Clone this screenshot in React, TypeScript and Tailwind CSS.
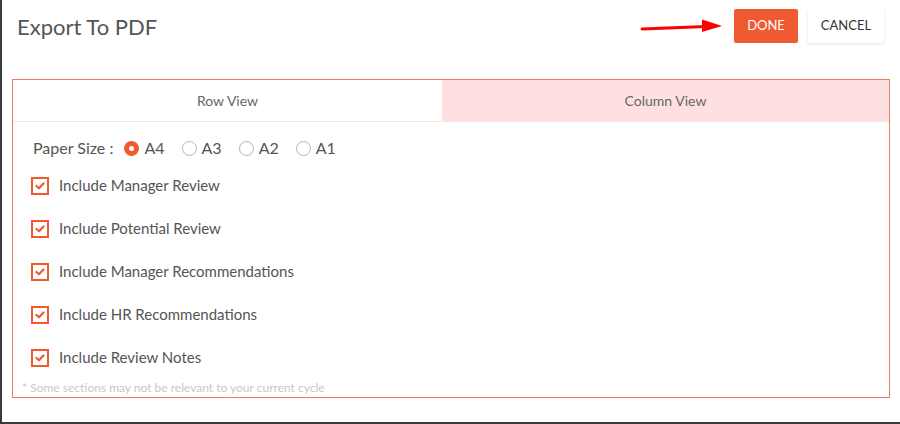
import React from "react";

const items = [
  "Include Manager Review",
  "Include Potential Review",
  "Include Manager Recommendations",
  "Include HR Recommendations",
  "Include Review Notes",
];

function Check() {
  return (
    <span className="flex h-[18px] w-[18px] items-center justify-center border-2 border-[#f05a30] bg-white">
      <svg width="10" height="8" viewBox="0 0 10 8">
        <path d="M1.5 4 L4 6.3 L8.5 1.5" fill="none" stroke="#f05a30" strokeWidth="2.2" strokeLinecap="round" strokeLinejoin="round" />
      </svg>
    </span>
  );
}

function Radio({ checked, label }: { checked?: boolean; label: string }) {
  return (
    <span className="flex items-center gap-[5px]">
      {checked ? (
        <span className="flex h-[15px] w-[15px] items-center justify-center rounded-full bg-[#f05a30]">
          <span className="h-[5px] w-[5px] rounded-full bg-white" />
        </span>
      ) : (
        <span className="h-[15px] w-[15px] rounded-full border border-[#b5b5b5] bg-white" />
      )}
      <span>{label}</span>
    </span>
  );
}

export default function App() {
  return (
    <div className="h-[424px] w-[900px] overflow-hidden bg-[#3a3a3a] pl-[2px]" style={{ fontFamily: "Lato, 'Open Sans', sans-serif" }}>
      <div className="flex h-[422px] w-[898px] flex-col bg-white">
        <div className="flex h-[79px] items-start justify-between">
          <h1 className="ml-[15px] mt-[10px] text-[22px] font-normal text-[#555]">Export To PDF</h1>
          <div className="mr-[16px] mt-[9px] flex items-center">
            <svg width="86" height="14" viewBox="0 0 86 14" className="mr-[8px]">
              <path d="M2 10 L66 7.5" stroke="#f00" strokeWidth="3" strokeLinecap="round" />
              <path d="M62 0.5 L82 7 L62 13 Z" fill="#f00" />
            </svg>
            <button className="h-[34px] w-[64px] rounded-[2px] bg-[#f05a30] text-[13px] text-white">DONE</button>
            <button className="ml-[10px] h-[34px] w-[76px] rounded-[2px] bg-white text-[13px] text-[#333] shadow-[0_1px_3px_rgba(0,0,0,0.12)]">CANCEL</button>
          </div>
        </div>
        <div className="ml-[10px] flex h-[319px] w-[878px] flex-col border border-[#ef7b5c]">
          <div className="flex h-[43px] border-b border-[#fbe3e0]">
            <div className="flex w-[429px] items-center justify-center bg-white text-[14px] text-[#666]">Row View</div>
            <div className="flex flex-1 items-center justify-center bg-[#ffe0e0] text-[14px] text-[#666]">Column View</div>
          </div>
          <div className="flex h-[39px] items-end gap-[17px] pl-[20px] text-[16px] text-[#555]">
            <span className="mr-[-6px]">Paper Size :</span>
            <Radio checked label="A4" />
            <Radio label="A3" />
            <Radio label="A2" />
            <Radio label="A1" />
          </div>
          <div className="flex flex-col pl-[18px] pt-[4px]">
            {items.map((t) => (
              <div key={t} className="flex h-[43px] items-center gap-[10px] text-[15px] text-[#555]">
                <Check />
                <span>{t}</span>
              </div>
            ))}
          </div>
          <div className="pl-[9px] pt-0 text-[12px] text-[#c8c8c8]">* Some sections may not be relevant to your current cycle</div>
        </div>
      </div>
    </div>
  );
}
